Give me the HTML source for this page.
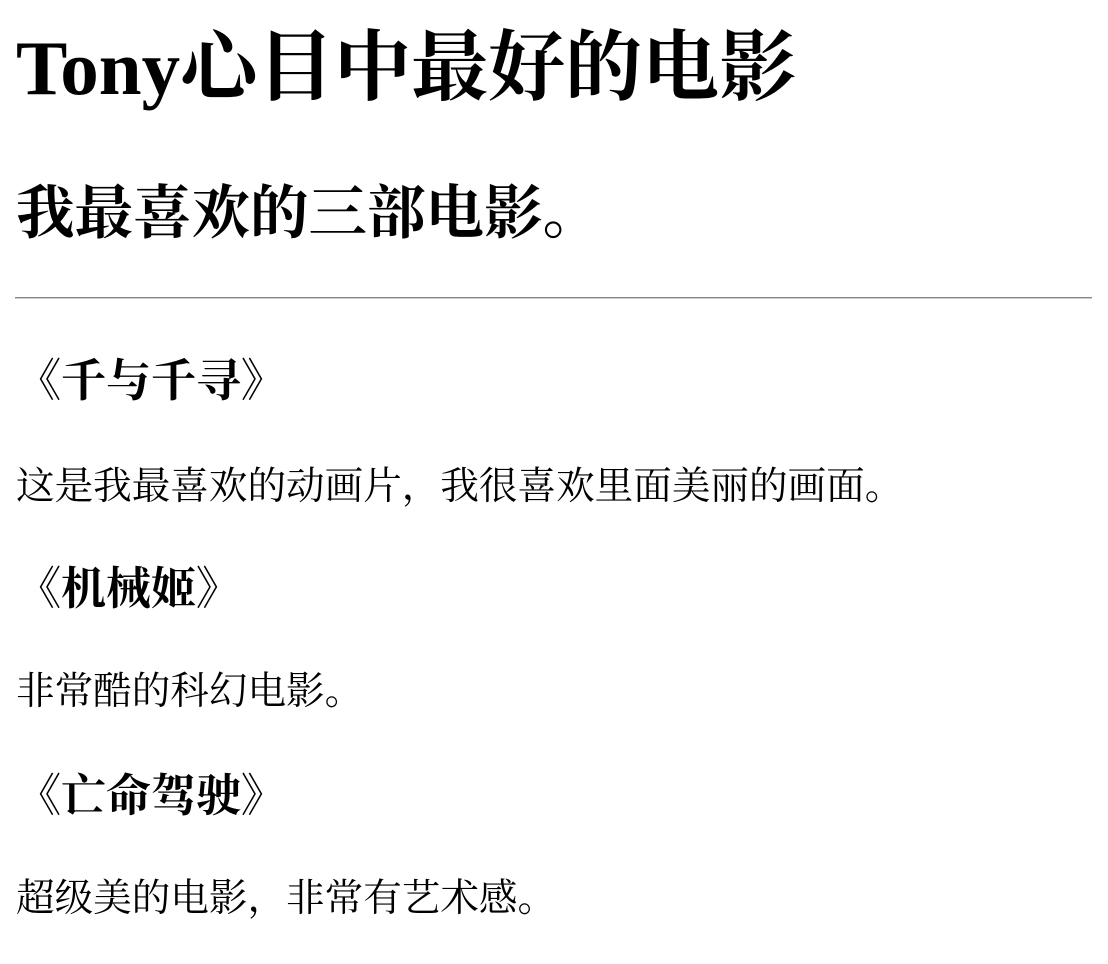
<!DOCTYPE html>
<html><head><meta charset="utf-8"><style>
body{margin:0;width:1108px;height:964px;background:#fff;color:#000;font-family:"Liberation Serif","Noto Serif CJK SC",serif;position:relative;overflow:hidden}
.t{position:absolute;left:16px;white-space:nowrap;margin:0}
h1{font-size:77px;line-height:77px;font-weight:bold}
h2{font-size:58.5px;line-height:58px;font-weight:bold}
h3{font-size:45px;line-height:45px;font-weight:bold}
p{font-size:38.6px;line-height:38px}
.hr{position:absolute;left:15px;width:1077px;top:297px;height:0;border-top:1px solid #888;border-bottom:1px solid #ccc}
</style></head><body>
<h1 class="t" style="top:30px">Tony心目中最好的电影</h1>
<h2 class="t" style="top:185px">我最喜欢的三部电影。</h2>
<div class="hr"></div>
<h3 class="t" style="top:359px">《千与千寻》</h3>
<p class="t" style="top:468px">这是我最喜欢的动画片，我很喜欢里面美丽的画面。</p>
<h3 class="t" style="top:567px">《机械姬》</h3>
<p class="t" style="top:673px">非常酷的科幻电影。</p>
<h3 class="t" style="top:774px">《亡命驾驶》</h3>
<p class="t" style="top:880px">超级美的电影，非常有艺术感。</p>
</body></html>
